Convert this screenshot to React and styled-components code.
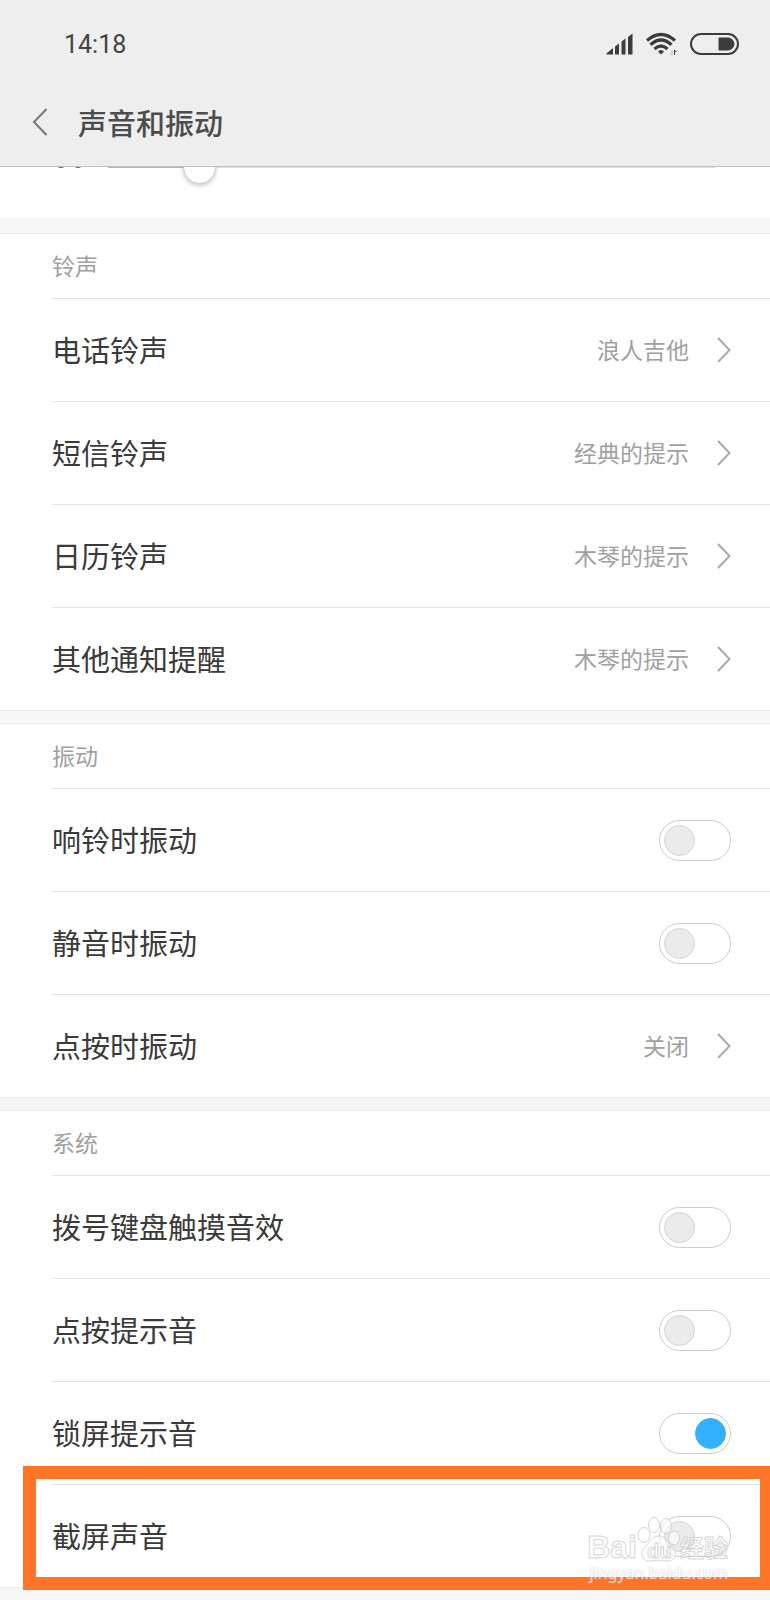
import React, { useState } from 'react'
import styled, { createGlobalStyle } from 'styled-components'

const ringtones = [
    { name: '电话铃声', value: '浪人吉他' },
    { name: '短信铃声', value: '经典的提示' },
    { name: '日历铃声', value: '木琴的提示' },
    { name: '其他通知提醒', value: '木琴的提示' },
]

const Chevron = () => (
    <svg width="14" height="26" viewBox="0 0 14 26" fill="none" stroke="#aaaaaa" strokeWidth="2">
        <path d="M1 1 L12.5 13 L1 25" />
    </svg>
)

function LinkItem({ name, value }) {
    return (
        <LinkRow href="#">
            <Name>{name}</Name>
            <Value>{value}</Value>
            <Chevron />
        </LinkRow>
    )
}

function SwitchItem({ name, defaultOn, children }) {
    const [on, setOn] = useState(!!defaultOn)

    return (
        <SwitchRow>
            <Name>{name}</Name>
            <Switch type="checkbox" role="switch" checked={on} onChange={(e) => setOn(e.target.checked)} />
            {children}
        </SwitchRow>
    )
}

function StatusIcons() {
    return (
        <Icons>
            <svg width="27" height="22" viewBox="0 0 27 22" fill="#3c3c3c">
                <path d="M0.5 21.5 V20.5 L7 15 V21.5Z" />
                <path d="M9 21.5 V13.5 L13 10.5 V21.5Z" />
                <path d="M15.5 21.5 V8.5 L19.5 5.5 V21.5Z" />
                <path d="M22 21.5 V4 L26.5 0.5 V21.5Z" />
            </svg>
            <svg width="31" height="24" viewBox="0 0 31 24" fill="none" stroke="#3c3c3c" strokeWidth="3.2">
                <path d="M1 8.5 Q15 -3.5 29 8.5" />
                <path d="M4.5 12.8 Q15 3.2 25.5 12.8" />
                <path d="M8.5 17 Q15 11 21.5 17" />
                <path d="M12 19.5 Q15 16.5 18 19.5 L15 22.5Z" fill="#3c3c3c" stroke="none" />
                <path d="M28.5 23 V18 L30.5 20" strokeWidth="1" />
                <path d="M26 18 V23 L24.5 21.5" stroke="#bbbbbb" strokeWidth="1" />
            </svg>
            <svg width="49" height="22" viewBox="0 0 49 22">
                <rect x="1" y="1" width="47" height="20" rx="10" fill="none" stroke="#3c3c3c" strokeWidth="2" />
                <path d="M29 5 H38 A6 6 0 0 1 38 17 H29 Z" fill="#3c3c3c" stroke="#3c3c3c" strokeLinejoin="round" />
            </svg>
        </Icons>
    )
}

function Watermark() {
    return (
        <Mark>
            <Brand>
                <span>Bai</span>
                <svg width="43" height="46" viewBox="0 0 43 46" fill="#ffffff" fillOpacity="0.8" stroke="#c4c4c4">
                    <ellipse cx="7" cy="19" rx="6" ry="7.5" />
                    <ellipse cx="17" cy="9" rx="5.5" ry="7.5" />
                    <ellipse cx="29" cy="10" rx="5.5" ry="7.5" />
                    <ellipse cx="37" cy="22" rx="5.5" ry="7" />
                    <path d="M22 20 C29 20 30 27 35 31 C42 37 38 46 29 45 C24 44 19 44 14 45 C5 46 2 37 8 31 C13 26 15 20 22 20Z" />
                    <text x="10" y="42" fontSize="20" fontWeight="700" fontFamily="Liberation Sans, sans-serif">du</text>
                </svg>
                <BrandCn>经验</BrandCn>
            </Brand>
            <Site>jingyan.baidu.com</Site>
        </Mark>
    )
}

function App() {

    const [volume, setVolume] = useState(13)

    return (
        <>
        <GlobalStyle />
        <Header>
            <StatusBar>
                <Time>14:18</Time>
                <StatusIcons />
            </StatusBar>
            <TitleBar>
                <Back aria-label="返回">
                    <svg width="16" height="28" viewBox="0 0 16 28" fill="none" stroke="#777777" strokeWidth="2">
                        <path d="M14.5 1 L2 14 L14.5 27" />
                    </svg>
                </Back>
                <Title>声音和振动</Title>
            </TitleBar>
        </Header>
        <VolumeRow>
            <svg width="30" height="32" viewBox="0 0 30 32" fill="none" stroke="#555555" strokeWidth="2">
                <circle cx="8" cy="11" r="5" />
                <circle cx="25" cy="11" r="5" />
            </svg>
            <Slider type="range" aria-label="音量" value={volume} onChange={(e) => setVolume(e.target.value)} style={{ '--level': `${volume}%` }} />
        </VolumeRow>

        <Section>
            <SectionTitle>铃声</SectionTitle>
            {ringtones.map((item) => (
                <LinkItem key={item.name} name={item.name} value={item.value} />
            ))}
        </Section>

        <Section>
            <SectionTitle>振动</SectionTitle>
            <SwitchItem name="响铃时振动" />
            <SwitchItem name="静音时振动" />
            <LinkItem name="点按时振动" value="关闭" />
        </Section>

        <Section>
            <SectionTitle>系统</SectionTitle>
            <SwitchItem name="拨号键盘触摸音效" />
            <SwitchItem name="点按提示音" />
            <SwitchItem name="锁屏提示音" defaultOn />
            <SwitchItem name="截屏声音">
                <Highlight />
                <Watermark />
            </SwitchItem>
        </Section>
        </>
    )
}

const GlobalStyle = createGlobalStyle`
    * {
        box-sizing: border-box;
    }
    body {
        margin: 0;
        background: #f6f6f6;
        color: #3a3a3a;
        font-family: "Noto Sans CJK SC", sans-serif;
    }
    svg {
        flex-shrink: 0;
    }
`

const Header = styled.header`
    position: relative;
    z-index: 1;
    background: #eeeeee;
    border-bottom: 1px solid #c0c0c0;
`

const StatusBar = styled.div`
    display: flex;
    justify-content: space-between;
    align-items: center;
    height: 80px;
    padding: 8px 31px 0 64px;
`

const Time = styled.span`
    font-family: Roboto, sans-serif;
    font-size: 25px;
    color: #444444;
`

const Icons = styled.div`
    display: flex;
    align-items: center;
    gap: 13px;
`

const TitleBar = styled.div`
    display: flex;
    align-items: center;
    gap: 30px;
    height: 86px;
    padding: 0 32px 2px;
`

const Back = styled.button`
    display: flex;
    padding: 0;
    border: none;
    background: none;
    cursor: pointer;
`

const Title = styled.h1`
    margin: 0;
    font-size: 29px;
    font-weight: 500;
    color: #4c4c4c;
`

/* half of this row is scrolled under the header */
const VolumeRow = styled.div`
    display: flex;
    align-items: center;
    gap: 25px;
    height: 102px;
    margin-top: -51px;
    margin-bottom: 15px;
    padding: 0 55px 0 53px;
    background: #ffffff;
`

const Slider = styled.input`
    flex: 1;
    min-width: 0;
    height: 34px;
    margin: 0;
    appearance: none;
    background: linear-gradient(to right, #8cc4c8 var(--level), #dddddd var(--level)) center / 100% 2px no-repeat;
    &::-webkit-slider-thumb {
        appearance: none;
        width: 33px;
        height: 33px;
        border: 1px solid #cccccc;
        border-radius: 50%;
        background: #ffffff;
        box-shadow: 0 2px 4px rgba(0, 0, 0, 0.2);
    }
`

const Section = styled.section`
    margin-bottom: 12px;
    border-top: 1px solid #ebebeb;
    border-bottom: 1px solid #ebebeb;
    background: #ffffff;
`

const SectionTitle = styled.h2`
    display: flex;
    align-items: center;
    height: 64px;
    margin: 0 0 0 52px;
    padding-bottom: 2px;
    font-size: 23px;
    font-weight: 400;
    color: #a0a0a0;
`

const rowStyle = `
    position: relative;
    display: flex;
    align-items: center;
    height: 103px;
    margin-left: 52px;
    padding-right: 39px;
    border-top: 1px solid #e4e4e4;
    color: inherit;
    cursor: pointer;
`

const LinkRow = styled.a`
    ${rowStyle}
    text-decoration: none;
`

const SwitchRow = styled.label`
    ${rowStyle}
`

const Name = styled.span`
    flex: 1;
    padding-bottom: 2px;
    font-size: 29px;
`

const Value = styled.span`
    margin-right: 28px;
    padding-bottom: 2px;
    font-size: 23px;
    color: #a0a0a0;
`

const Switch = styled.input`
    display: flex;
    align-items: center;
    width: 72px;
    height: 41px;
    margin: 0;
    padding: 0 4px;
    appearance: none;
    border: 1px solid #cccccc;
    border-radius: 21px;
    background: #ffffff;
    cursor: pointer;
    &::before {
        content: '';
        width: 29px;
        height: 29px;
        border: 1px solid #d4d4d4;
        border-radius: 50%;
        background: #ebebeb;
    }
    &:checked {
        justify-content: flex-end;
    }
    &:checked::before {
        border-color: #33b0ff;
        background: #33b0ff;
    }
`

const Highlight = styled.span`
    position: absolute;
    top: -19px;
    right: 0;
    bottom: -3px;
    left: -29px;
    border: 13px solid #ff7528;
    border-right-width: 10px;
    pointer-events: none;
`

const Mark = styled.span`
    position: absolute;
    right: 42px;
    bottom: 3px;
    display: flex;
    flex-direction: column;
    align-items: flex-end;
    opacity: 0.7;
    pointer-events: none;
`

const Brand = styled.span`
    display: flex;
    align-items: flex-end;
    height: 46px;
    color: rgba(255, 255, 255, 0.8);
    font-family: "Liberation Sans", sans-serif;
    font-size: 32px;
    font-weight: 700;
    line-height: 30px;
    -webkit-text-stroke: 1px #c8c8c8;
`

const BrandCn = styled.span`
    font-family: "Noto Sans CJK SC", sans-serif;
    font-size: 24px;
`

const Site = styled.span`
    color: #ffffff;
    font-family: "Noto Sans", sans-serif;
    font-size: 16px;
    line-height: 22px;
    text-shadow: 0 0 2px #aaaaaa;
`

export default App
